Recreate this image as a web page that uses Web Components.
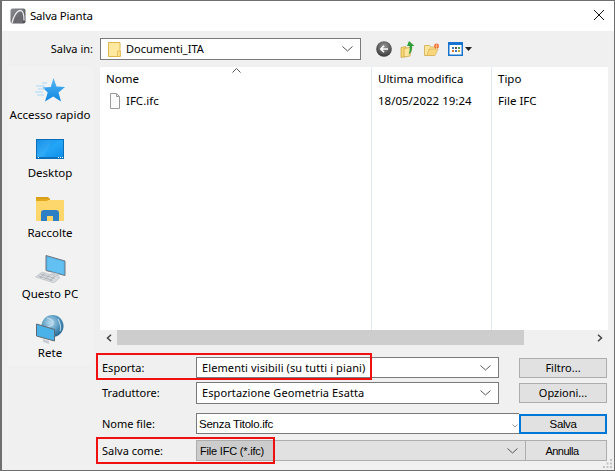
<!DOCTYPE html>
<html><head><meta charset="utf-8">
<style>
html,body{margin:0;padding:0;background:#f0f0f0;overflow:hidden}
body{width:615px;height:471px;font:11.5px/16px "Noto Sans","Open Sans",sans-serif;color:#000}
</style></head><body>
<x-dialog>
  <x-titlebar slot="title">Salva Pianta</x-titlebar>
  <div slot="loc" style="display:contents">
    <x-label style="width:91px;text-align:right;font-size:11px">Salva in:</x-label>
    <x-combo style="width:261px;margin-left:7px;height:22px;font-size:11px" folder>Documenti_ITA</x-combo>
    <x-toolicons></x-toolicons>
  </div>
  <x-places slot="side"></x-places>
  <x-filelist slot="list"></x-filelist>
  <x-hscroll slot="scroll"></x-hscroll>
  <x-form slot="form"></x-form>
</x-dialog>
<script>
function def(name,html){customElements.define(name,class extends HTMLElement{connectedCallback(){if(this.shadowRoot)return;const r=this.attachShadow({mode:'open'});r.innerHTML=typeof html==='function'?html(this):html;}});}

def('x-dialog',`<style>
:host{display:flex;flex-direction:column;width:615px;height:471px;box-sizing:border-box;border:1px solid #6f6f6f;border-left-width:2px;position:relative;background:#f0f0f0}
.t{flex:none;height:30px}
.l{flex:none;height:36px;display:flex;align-items:center}
.m{flex:none;height:278px;display:flex;padding-left:5px;align-items:stretch}
.s{flex:none;width:86px;margin-right:7px}
.r{flex:none;width:508px;display:flex;flex-direction:column}
.f{flex:1;position:relative}
</style>
<div class="t"><slot name="title"></slot></div>
<div class="l"><slot name="loc"></slot></div>
<div class="m"><div class="s"><slot name="side"></slot></div><div class="r"><slot name="list"></slot><slot name="scroll"></slot></div></div>
<div class="f"><slot name="form"></slot></div>`);

def('x-titlebar',`<style>
:host{display:flex;align-items:center;height:30px;background:#fff;padding-left:8px;font-size:11.5px;letter-spacing:-.2px;position:relative}
svg.a{margin-right:4px}
svg.x{position:absolute;right:10px;top:9px}
</style>
<svg class="a" width="16" height="16" viewBox="0 0 16 16"><defs><linearGradient id="g" x1="0" y1="0" x2="1" y2="1"><stop offset="0" stop-color="#8e8e96"/><stop offset="1" stop-color="#4a4a50"/></linearGradient></defs><rect x=".5" y=".5" width="15" height="15" rx="2" fill="url(#g)"/><path d="M2 15C3.500 8 7 2.500 10.500 2.500c2.500 0 3.500 4 3.500 10" fill="none" stroke="#e8e8ea" stroke-width="1.300"/><path d="M6 15C7 10 9 6 10.500 6c1.500 0 2 3 2 9" fill="#6a6a70"/></svg><slot></slot>
<svg class="x" width="10" height="10" viewBox="0 0 10 10"><path d="M0 0l10 10M10 0L0 10" stroke="#111" stroke-width="1"/></svg>`);

def('x-label',`<style>:host{display:block;flex:none;box-sizing:border-box}</style><slot></slot>`);

const chev=`<svg width="11" height="6" viewBox="0 0 11 6" style="display:block"><path d="M.5.5L5.500 5l5-4.500" fill="none" stroke="#555" stroke-width="1"/></svg>`;
const folderIcon=`<svg width="13" height="17" viewBox="0 0 13 17" style="margin-right:5px;flex:none"><path d="M.5 1.500h11.500v14H.5z" fill="#ffe9a0" stroke="#e0b64e"/><path d="M9.500 10h3v5.500h-3z" fill="#ffdf86" stroke="#e0b64e" stroke-width=".7"/></svg>`;
def('x-combo',h=>`<style>
:host{display:flex;align-items:center;box-sizing:border-box;border:1px solid #7a7a7a;background:#fff;flex:none;position:relative}
.t{flex:1;padding-left:${h.hasAttribute('folder')?'7px':'5px'};white-space:nowrap;display:flex;align-items:center}
.c{flex:none;width:26px;display:flex;justify-content:center}
</style><div class="t">${h.hasAttribute('folder')?folderIcon:''}<slot></slot></div><div class="c">${chev}</div>`);

def('x-toolicons',`<style>:host{display:flex;align-items:center;margin-left:15px;gap:0}svg{display:block;flex:none}</style>
<svg width="16" height="16" viewBox="0 0 16 16" style="margin-right:8px"><defs><radialGradient id="b" cx=".5" cy=".35" r=".7"><stop offset="0" stop-color="#9a9a9a"/><stop offset="1" stop-color="#303030"/></radialGradient></defs><circle cx="8" cy="8" r="7.800" fill="url(#b)"/><path d="M12 8H5M8 4.800L4.800 8 8 11.200" fill="none" stroke="#fff" stroke-width="1.600"/></svg>
<svg width="15" height="17" viewBox="0 0 15 17" style="margin-right:9px"><path d="M1 6.500l5-1v10l-5 1z" fill="#f7d774" stroke="#c9a13c" stroke-width=".7"/><path d="M4 7.500l8-1.500-2 9-6 1z" fill="#fde59b" stroke="#c9a13c" stroke-width=".7"/><path d="M9 0l5.500 5H12c0 4-.5 7-3.500 8.500 1-2.500 1.500-5 1-8.500H7z" fill="#2f9e3a"/></svg>
<svg width="16" height="13" viewBox="0 0 16 13" style="margin-right:8px"><path d="M.5 2.500h5l1 1.500h5v2l-2 6.500H.5z" fill="#fde59b" stroke="#d0a94a" stroke-width=".8"/><path d="M3 12.500L5 6h9l-3 6.500z" fill="#f8d77c" stroke="#d0a94a" stroke-width=".6"/><circle cx="12.500" cy="3" r="2.500" fill="#ee6a33"/><path d="M12.500 0v6M9.800 3h5.400" stroke="#ffd0a0" stroke-width=".6"/></svg>
<svg width="15" height="14" viewBox="0 0 15 14"><rect x=".75" y=".75" width="13.500" height="12.500" fill="#fff" stroke="#1673d0" stroke-width="1.500"/><rect x="1" y="1" width="13" height="2" fill="#1673d0"/><rect x="4" y="5" width="2" height="2" fill="#3a7bc8"/><rect x="7" y="5" width="2" height="2" fill="#555"/><rect x="10" y="5" width="2" height="2" fill="#4aa050"/><rect x="4" y="8" width="2" height="2" fill="#e0702a"/><rect x="7" y="8" width="2" height="2" fill="#3a7bc8"/><rect x="10" y="8" width="2" height="2" fill="#c8a030"/></svg>
<svg width="7" height="4" viewBox="0 0 7 4" style="margin-left:2px"><path d="M0 0h7L3.500 4z" fill="#222"/></svg>`);

const star=`<svg width="30" height="25" viewBox="0 0 30 25"><defs><linearGradient id="s" x1="0" y1="0" x2="0" y2="1"><stop offset="0" stop-color="#55b8f8"/><stop offset="1" stop-color="#0f86df"/></linearGradient></defs><path d="M18.500 0l3 8.500 8.500.5-6.500 5.500 2.500 9-7.800-5-8.200 5 2.700-9-5.200-5 8.300-.5z" fill="url(#s)"/><path d="M1 8h9M3 11h7M0 14h8M2 17h7M7 5h5" stroke="#a9d8f7" stroke-width="1"/></svg>`;
const desktop=`<svg width="28" height="20" viewBox="0 0 28 20"><defs><linearGradient id="d" x1="0" y1="0" x2="1" y2="1"><stop offset="0" stop-color="#0e8ae6"/><stop offset=".5" stop-color="#24a6f7"/><stop offset="1" stop-color="#0f8fe9"/></linearGradient></defs><rect width="28" height="20" fill="#0a6fb8"/><rect x="1" y="1" width="26" height="17" fill="url(#d)"/><path d="M1 1h15L8 18H1z" fill="#fff" opacity=".06"/><rect x="1" y="18" width="26" height="1" fill="#0d70b8"/><path d="M2 18h1v1H2zM22 18h1v1h-1zM24 18h1v1h-1zM26 18h1v1h-1z" fill="#fff"/></svg>`;
const lib=`<svg width="28" height="24" viewBox="0 0 28 24"><path d="M0 0h12l2 2v3H0z" fill="#d9a017"/><path d="M0 3h28v21H0z" fill="#fdd66c"/><path d="M0 2h13l-2 2H0z" fill="#e2a91c"/><path d="M5 24v-8a3 3 0 0 1 3-3h12a3 3 0 0 1 3 3v8h-6v-5h-6v5z" fill="#2c7fc4"/><path d="M11 19h6v5h-6z" fill="#fcd566"/></svg>`;
const pc=`<svg width="31" height="28" viewBox="0 0 31 28"><path d="M11 .5l19 5.500v14.500l-19-5z" fill="#56b5ea" stroke="#6d7780"/><path d="M12.500 2.500l16 4.500v12l-16-4.200z" fill="#62c0f2"/><path d="M16 17l8 2v2.500l-8-2z" fill="#c8ced4"/><path d="M7 17l18 5.500-6 5.500L.5 22z" fill="#d7dade" stroke="#b8bcc0" stroke-width=".6"/><path d="M5.500 19l14 4.500M3.500 21l14 4.500M10 18l-5 5M15 19.500l-5 5M20 21l-5 5" stroke="#9aa0a6" stroke-width=".6"/></svg>`;
const net=`<svg width="28" height="30" viewBox="0 0 28 30"><defs><radialGradient id="n" cx=".4" cy=".35" r=".75"><stop offset="0" stop-color="#b7dcf0"/><stop offset=".6" stop-color="#4a8fb8"/><stop offset="1" stop-color="#1d5a85"/></radialGradient></defs><circle cx="16.500" cy="11" r="11" fill="url(#n)"/><path d="M11 3c4 1 7 3 6 6s-5 1-6 4M22 4c2 4 4 8 2 12" fill="none" stroke="#dcecf5" stroke-width="1.200" opacity=".7"/><path d="M.5 9l18 5.500v11.500L.5 21z" fill="#4ab2e9" stroke="#5f6a72"/><path d="M7 24l6 2v3l-6-2z" fill="#c8ced4"/></svg>`;
def('x-places',`<style>
:host{display:block;height:298px;background:#f2f2f2;font-size:11.5px;text-align:center;position:relative}
.i{position:absolute;left:0;right:0;display:flex;flex-direction:column;align-items:center}
.i span{display:block;white-space:nowrap;line-height:16px}
svg{display:block}
</style>
<div class="i" style="top:11px">${star}<span style="margin-top:4px">Accesso rapido</span></div>
<div class="i" style="top:72px">${desktop}<span style="margin-top:6px">Desktop</span></div>
<div class="i" style="top:130px">${lib}<span style="margin-top:4px">Raccolte</span></div>
<div class="i" style="top:188px">${pc}<span style="margin-top:3px">Questo PC</span></div>
<div class="i" style="top:248px">${net}<span style="margin-top:0">Rete</span></div>`);

def('x-filelist',`<style>
:host{display:grid;grid-template-columns:272px 120px 116px;height:263px;background:#fff;flex:none;position:relative}
.b{display:flex;align-items:center;height:20px;white-space:nowrap}
.caret{position:absolute;left:132px;top:1px}
svg.f{margin:0 6px 0 4px;flex:none}
.col{display:flex;flex-direction:column;border-right:1px solid #e3e9f1;box-sizing:border-box;padding-left:6px}
.col.last{border-right:0}
.head{height:24px;display:flex;align-items:center;box-sizing:border-box}
</style>
<svg class="caret" width="9" height="5" viewBox="0 0 9 5"><path d="M.5 4.500L4.500.5l4 4" fill="none" stroke="#555"/></svg>
<div class="col"><div class="head">Nome</div><div class="b"><svg class="f" width="10" height="16" viewBox="0 0 10 16"><path d="M.5.5h6l3 3v12H.5z" fill="#fafafa" stroke="#9a9a9a"/><path d="M6.500.5V3.500h3" fill="none" stroke="#9a9a9a"/></svg>IFC.ifc</div></div>
<div class="col"><div class="head">Ultima modifica</div><div class="b">18/05/2022 19:24</div></div>
<div class="col last"><div class="head">Tipo</div><div class="b">File IFC</div></div>`);

def('x-hscroll',`<style>
:host{display:flex;height:15px;background:#f0f0f0;flex:none;align-items:stretch}
.a{width:17px;flex:none;display:flex;align-items:center;justify-content:center}
.t{width:407px;background:#cdcdcd;flex:none}
.s{flex:1}
</style>
<div class="a"><svg width="6" height="8" viewBox="0 0 6 8"><path d="M5 .8L1.500 4 5 7.200" fill="none" stroke="#444" stroke-width="1.500"/></svg></div><div class="t"></div><div class="s"></div>
<div class="a"><svg width="6" height="8" viewBox="0 0 6 8"><path d="M1 .8L4.500 4 1 7.200" fill="none" stroke="#444" stroke-width="1.500"/></svg></div>`);

def('x-btn',`<style>
:host{display:flex;align-items:center;justify-content:center;box-sizing:border-box;border:1px solid #adadad;background:#e1e1e1;flex:none;white-space:nowrap}
:host([primary]){border:2px solid #0078d7}
</style><slot></slot>`);

def('x-form',`<style>
:host{display:flow-root;position:relative;height:100%;font-size:11px}
.row{position:relative;display:flex;align-items:center;padding-left:100px}
.lab{width:94px;flex:none;box-sizing:border-box;white-space:nowrap}
.row1{height:21px;margin-top:12px}
.row2{height:22px;margin-top:4px}
.row3{height:21px;margin-top:9px}
.row4{height:21px;margin-top:6px}
.box{display:flex;align-items:center;box-sizing:border-box;border:1px solid #7a7a7a;background:#fff;height:100%;padding-left:2px;flex:none;position:relative;white-space:nowrap}
.tight{font-family:"Liberation Sans",sans-serif;font-size:11.5px;letter-spacing:-.25px}
.dis{background:#e1e1e1;border-color:#adadad}
.dis .sel{background:#ccc;display:flex;align-items:center;margin-left:-2px;height:100%;width:77px;padding-left:3px;box-sizing:border-box;flex:none;font-size:11px;letter-spacing:-.2px}
.red{position:absolute;border:2px solid #f01010;box-sizing:border-box;pointer-events:none}
x-combo{height:100%}
</style>
<div class="row row1"><div class="lab">Esporta:</div><x-combo style="width:303px;letter-spacing:.1px">Elementi visibili (su tutti i piani)</x-combo><x-btn style="width:88px;height:20px;margin-left:20px;font-size:11px">Filtro...</x-btn></div>
<div class="row row2"><div class="lab">Traduttore:</div><x-combo style="width:303px;letter-spacing:.1px">Esportazione Geometria Esatta</x-combo><x-btn style="width:88px;height:20px;margin-left:20px">Opzioni...</x-btn></div>
<div class="row row3"><div class="lab">Nome file:</div><div class="box tight" style="width:323px;border-right:0">Senza Titolo.ifc<svg style="position:absolute;right:1px;top:10px" width="6" height="4" viewBox="0 0 6 4"><path d="M.5.5L3 3 5.500.5" fill="none" stroke="#999"/></svg></div><x-btn primary class="tight" style="width:88px;height:20px;letter-spacing:-.4px">Salva</x-btn></div>
<div class="row row4"><div class="lab">Salva come:</div><div class="box dis tight" style="width:330px;justify-content:space-between;padding-right:0"><div class="sel">File IFC (*.ifc)</div><div style="width:26px;display:flex;justify-content:center">${chev}</div></div><x-btn class="tight" style="width:81px;height:21px;border-left:0;letter-spacing:-.5px;padding-right:8px;font-size:11px">Annulla</x-btn></div>
<div class="red" style="left:94px;top:8px;width:276px;height:27px"></div>
<div class="red" style="left:94px;top:92px;width:179px;height:27px"></div>
<svg style="position:absolute;right:1px;bottom:1px" width="11" height="11" viewBox="0 0 11 11"><path d="M8 1h2v2H8zM4.500 4.500h2v2h-2zM8 4.500h2v2H8zM1 8h2v2H1zM4.500 8h2v2h-2zM8 8h2v2H8z" fill="#c4c4c4"/></svg>`);
</script>
</body></html>
